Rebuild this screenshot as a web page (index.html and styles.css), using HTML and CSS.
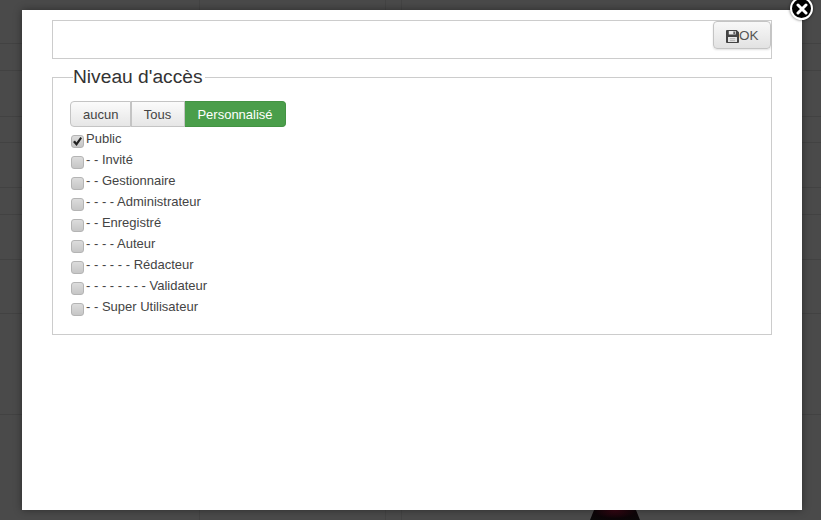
FILE: index.html
```html
<!DOCTYPE html>
<html lang="fr">
<head>
<meta charset="utf-8">
<title>Niveau d'accès</title>
<link rel="stylesheet" href="styles.css">
</head>
<body>
<div class="backdrop">
  <div class="hline l1"></div><div class="hline l2"></div><div class="hline l3"></div>
  <div class="hline l4"></div><div class="hline l5"></div><div class="hline l6"></div>
  <div class="hline l7"></div><div class="hline l8"></div><div class="hline l9"></div>
  <div class="vline v1"></div><div class="vline v2"></div><div class="vline v3"></div>
  <div class="bottle"></div>
</div>
<main class="modal">
  <div class="toolbar">
    <button class="ok" type="button">
      <svg class="save" viewBox="0 0 14 14" width="13" height="13" aria-hidden="true">
        <path fill="#444" d="M0 1a1 1 0 0 1 1-1h10.500L14 2.500V13a1 1 0 0 1-1 1H1a1 1 0 0 1-1-1z"/>
        <path fill="#ececec" d="M3 1.200h7.500v3.600H3zM2.200 7.500h9.600v5.300H2.200z"/>
        <path fill="#444" d="M8 1.500h1.500v3H8z"/>
        <path fill="#aaa" d="M4 9h6v1H4zM4 11h6v1H4z"/>
      </svg><span>OK</span>
    </button>
  </div>
  <fieldset class="access">
    <legend>Niveau d'accès</legend>
    <div class="group">
      <button class="seg" type="button">aucun</button>
      <button class="seg" type="button">Tous</button>
      <button class="seg active" type="button">Personnalisé</button>
    </div>
    <ul class="levels">
      <li><label><input type="checkbox" checked><span>Public</span></label></li>
      <li><label><input type="checkbox"><span>- - Invité</span></label></li>
      <li><label><input type="checkbox"><span>- - Gestionnaire</span></label></li>
      <li><label><input type="checkbox"><span>- - - - Administrateur</span></label></li>
      <li><label><input type="checkbox"><span>- - Enregistré</span></label></li>
      <li><label><input type="checkbox"><span>- - - - Auteur</span></label></li>
      <li><label><input type="checkbox"><span>- - - - - - Rédacteur</span></label></li>
      <li><label><input type="checkbox"><span>- - - - - - - - Validateur</span></label></li>
      <li><label><input type="checkbox"><span>- - Super Utilisateur</span></label></li>
    </ul>
  </fieldset>
  <button class="close" type="button" aria-label="Fermer">
    <svg viewBox="0 0 12 12" width="12" height="12" aria-hidden="true">
      <path d="M2 2l8 8M10 2l-8 8" stroke="#fff" stroke-width="3" stroke-linecap="round" fill="none"/>
    </svg>
  </button>
</main>
</body>
</html>
```

FILE: styles.css
```css
* { box-sizing: border-box; }
html, body { height: 100%; }
body {
  margin: 0;
  height: 520px;
  overflow: hidden;
  padding: 10px 19px 10px 22px;
  background: #4a4a4a;
  font-family: "Liberation Sans", Arial, sans-serif;
  font-size: 13px;
  color: #444;
}
.backdrop { position: absolute; inset: 0; overflow: hidden; }
.hline { position: absolute; left: 0; right: 0; height: 1px; background: #424242; }
.l1 { top: 43px; } .l2 { top: 70px; } .l3 { top: 116px; }
.l4 { top: 142px; } .l5 { top: 187px; } .l6 { top: 214px; }
.l7 { top: 259px; } .l8 { top: 313px; } .l9 { top: 414px; }
.vline { position: absolute; top: 0; bottom: 0; width: 1px; background: #444; }
.v1 { left: 199px; } .v2 { left: 385px; } .v3 { left: 401px; }
.bottle {
  position: absolute;
  left: 590px;
  top: 510px;
  width: 50px;
  height: 10px;
  clip-path: polygon(8% 0, 92% 0, 100% 100%, 0 100%);
  background: radial-gradient(ellipse at 50% 0, #3a0614 0, #0d0508 60%, #0a0a0a 100%);
}
.modal {
  position: relative;
  width: 780px;
  height: 500px;
  padding: 10px 30px;
  background: #fff;
  box-shadow: 0 0 8px rgba(0, 0, 0, .4);
}
.toolbar {
  display: flex;
  justify-content: flex-end;
  height: 39px;
  border: 1px solid #ccc;
  margin-bottom: 9px;
}
.ok {
  display: flex;
  align-items: center;
  width: 58px;
  height: 28px;
  padding: 0 0 0 12px;
  border: 1px solid #c4c4c4;
  border-radius: 4px;
  background: linear-gradient(#f8f8f8, #e2e2e2);
  box-shadow: 0 1px 2px rgba(0, 0, 0, .12);
  font: 13.500px "Liberation Sans", Arial, sans-serif;
  color: #555;
}
.save { margin-top: 2px; }
.access {
  margin: 0;
  height: 267px;
  padding: 15px 17px 0;
  border: 1px solid #ccc;
}
.access legend {
  margin-left: 3px;
  padding: 0 2px 0 0;
  font-size: 19.200px;
  line-height: 18px;
  color: #333;
}
.group { display: flex; }
.seg {
  height: 26px;
  padding: 0 12px;
  border: 1px solid #c4c4c4;
  border-left-width: 0;
  background: linear-gradient(#fbfbfb, #e6e6e6);
  font: 13px "Liberation Sans", Arial, sans-serif;
  color: #444;
}
.seg:first-child { width: 61px; border-left-width: 1px; border-radius: 4px 0 0 4px; }
.seg:nth-child(2) { width: 54px; box-shadow: inset 1px 0 0 #c4c4c4; }
.seg.active {
  width: 101px;
  border-color: #439343;
  border-radius: 0 4px 4px 0;
  background: #4a9e4a;
  color: #fff;
}
.levels { list-style: none; margin: 0; padding: 0; }
.levels li { height: 21px; }
.levels label { display: flex; height: 21px; }
.levels span { margin: 1px 0 0 2px; line-height: 21px; }
.levels input {
  appearance: none;
  position: relative;
  flex: none;
  width: 13px;
  height: 13px;
  margin: 8px 0 0 1px;
  border: 1px solid #b4b4b4;
  border-radius: 3px;
  background: linear-gradient(#dcdcdc, #c6c6c6);
}
.levels input:checked::after {
  content: "";
  position: absolute;
  left: 1px;
  top: 1px;
  width: 9px;
  height: 9px;
  background: #222;
  clip-path: polygon(0 55%, 22% 40%, 38% 62%, 82% 0, 100% 14%, 40% 100%);
}
.close {
  position: absolute;
  right: -11px;
  top: -13px;
  display: flex;
  align-items: center;
  justify-content: center;
  width: 23px;
  height: 23px;
  padding: 0;
  border: 2px solid #fff;
  border-radius: 50%;
  background: #000;
  box-shadow: 0 0 3px rgba(0, 0, 0, .6);
}
```
